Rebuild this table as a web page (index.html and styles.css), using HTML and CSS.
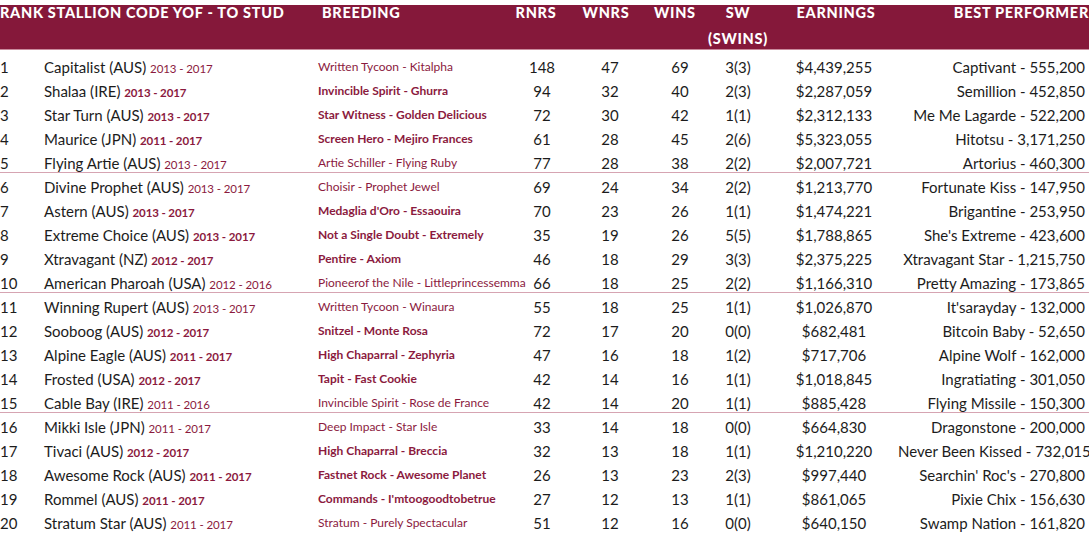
FILE: index.html
```html
<!DOCTYPE html>
<html lang="en">
<head>
<meta charset="utf-8">
<title>Stallion table</title>
<link rel="stylesheet" href="styles.css">
</head>
<body>
<div class="table">
  <div class="thead">
    <div class="h h-stallion">RANK STALLION CODE YOF - TO STUD</div>
    <div class="h h-breeding">BREEDING</div>
    <div class="h h-rnrs">RNRS</div>
    <div class="h h-wnrs">WNRS</div>
    <div class="h h-wins">WINS</div>
    <div class="h h-sw">SW<br>(SWINS)</div>
    <div class="h h-earn">EARNINGS</div>
    <div class="h h-best">BEST PERFORMER</div>
  </div>

  <div class="group">
    <div class="row"><span>1</span><span>Capitalist (AUS) <em>2013 - 2017</em></span><span class="br">Written Tycoon - Kitalpha</span><span class="n">148</span><span class="n">47</span><span class="n">69</span><span class="c">3(3)</span><span class="c">$4,439,255</span><span class="best">Captivant - 555,200</span></div>
    <div class="row bold"><span>2</span><span>Shalaa (IRE) <em>2013 - 2017</em></span><span class="br">Invincible Spirit - Ghurra</span><span class="n">94</span><span class="n">32</span><span class="n">40</span><span class="c">2(3)</span><span class="c">$2,287,059</span><span class="best">Semillion - 452,850</span></div>
    <div class="row bold"><span>3</span><span>Star Turn (AUS) <em>2013 - 2017</em></span><span class="br">Star Witness - Golden Delicious</span><span class="n">72</span><span class="n">30</span><span class="n">42</span><span class="c">1(1)</span><span class="c">$2,312,133</span><span class="best">Me Me Lagarde - 522,200</span></div>
    <div class="row bold"><span>4</span><span>Maurice (JPN) <em>2011 - 2017</em></span><span class="br">Screen Hero - Mejiro Frances</span><span class="n">61</span><span class="n">28</span><span class="n">45</span><span class="c">2(6)</span><span class="c">$5,323,055</span><span class="best">Hitotsu - 3,171,250</span></div>
    <div class="row"><span>5</span><span>Flying Artie (AUS) <em>2013 - 2017</em></span><span class="br">Artie Schiller - Flying Ruby</span><span class="n">77</span><span class="n">28</span><span class="n">38</span><span class="c">2(2)</span><span class="c">$2,007,721</span><span class="best">Artorius - 460,300</span></div>
  </div>

  <div class="group">
    <div class="row"><span>6</span><span>Divine Prophet (AUS) <em>2013 - 2017</em></span><span class="br">Choisir - Prophet Jewel</span><span class="n">69</span><span class="n">24</span><span class="n">34</span><span class="c">2(2)</span><span class="c">$1,213,770</span><span class="best">Fortunate Kiss - 147,950</span></div>
    <div class="row bold"><span>7</span><span>Astern (AUS) <em>2013 - 2017</em></span><span class="br">Medaglia d'Oro - Essaouira</span><span class="n">70</span><span class="n">23</span><span class="n">26</span><span class="c">1(1)</span><span class="c">$1,474,221</span><span class="best">Brigantine - 253,950</span></div>
    <div class="row bold"><span>8</span><span>Extreme Choice (AUS) <em>2013 - 2017</em></span><span class="br">Not a Single Doubt - Extremely</span><span class="n">35</span><span class="n">19</span><span class="n">26</span><span class="c">5(5)</span><span class="c">$1,788,865</span><span class="best">She's Extreme - 423,600</span></div>
    <div class="row bold"><span>9</span><span>Xtravagant (NZ) <em>2012 - 2017</em></span><span class="br">Pentire - Axiom</span><span class="n">46</span><span class="n">18</span><span class="n">29</span><span class="c">3(3)</span><span class="c">$2,375,225</span><span class="best">Xtravagant Star - 1,215,750</span></div>
    <div class="row"><span>10</span><span>American Pharoah (USA) <em>2012 - 2016</em></span><span class="br">Pioneerof the Nile - Littleprincessemma</span><span class="n">66</span><span class="n">18</span><span class="n">25</span><span class="c">2(2)</span><span class="c">$1,166,310</span><span class="best">Pretty Amazing - 173,865</span></div>
  </div>

  <div class="group">
    <div class="row"><span>11</span><span>Winning Rupert (AUS) <em>2013 - 2017</em></span><span class="br">Written Tycoon - Winaura</span><span class="n">55</span><span class="n">18</span><span class="n">25</span><span class="c">1(1)</span><span class="c">$1,026,870</span><span class="best">It'sarayday - 132,000</span></div>
    <div class="row bold"><span>12</span><span>Sooboog (AUS) <em>2012 - 2017</em></span><span class="br">Snitzel - Monte Rosa</span><span class="n">72</span><span class="n">17</span><span class="n">20</span><span class="c">0(0)</span><span class="c">$682,481</span><span class="best">Bitcoin Baby - 52,650</span></div>
    <div class="row bold"><span>13</span><span>Alpine Eagle (AUS) <em>2011 - 2017</em></span><span class="br">High Chaparral - Zephyria</span><span class="n">47</span><span class="n">16</span><span class="n">18</span><span class="c">1(2)</span><span class="c">$717,706</span><span class="best">Alpine Wolf - 162,000</span></div>
    <div class="row bold"><span>14</span><span>Frosted (USA) <em>2012 - 2017</em></span><span class="br">Tapit - Fast Cookie</span><span class="n">42</span><span class="n">14</span><span class="n">16</span><span class="c">1(1)</span><span class="c">$1,018,845</span><span class="best">Ingratiating - 301,050</span></div>
    <div class="row"><span>15</span><span>Cable Bay (IRE) <em>2011 - 2016</em></span><span class="br">Invincible Spirit - Rose de France</span><span class="n">42</span><span class="n">14</span><span class="n">20</span><span class="c">1(1)</span><span class="c">$885,428</span><span class="best">Flying Missile - 150,300</span></div>
  </div>

  <div class="group last">
    <div class="row"><span>16</span><span>Mikki Isle (JPN) <em>2011 - 2017</em></span><span class="br">Deep Impact - Star Isle</span><span class="n">33</span><span class="n">14</span><span class="n">18</span><span class="c">0(0)</span><span class="c">$664,830</span><span class="best">Dragonstone - 200,000</span></div>
    <div class="row bold"><span>17</span><span>Tivaci (AUS) <em>2012 - 2017</em></span><span class="br">High Chaparral - Breccia</span><span class="n">32</span><span class="n">13</span><span class="n">18</span><span class="c">1(1)</span><span class="c">$1,210,220</span><span class="best">Never Been Kissed - 732,015</span></div>
    <div class="row bold"><span>18</span><span>Awesome Rock (AUS) <em>2011 - 2017</em></span><span class="br">Fastnet Rock - Awesome Planet</span><span class="n">26</span><span class="n">13</span><span class="n">23</span><span class="c">2(3)</span><span class="c">$997,440</span><span class="best">Searchin' Roc's - 270,800</span></div>
    <div class="row bold"><span>19</span><span>Rommel (AUS) <em>2011 - 2017</em></span><span class="br">Commands - I'mtoogoodtobetrue</span><span class="n">27</span><span class="n">12</span><span class="n">13</span><span class="c">1(1)</span><span class="c">$861,065</span><span class="best">Pixie Chix - 156,630</span></div>
    <div class="row"><span>20</span><span>Stratum Star (AUS) <em>2011 - 2017</em></span><span class="br">Stratum - Purely Spectacular</span><span class="n">51</span><span class="n">12</span><span class="n">16</span><span class="c">0(0)</span><span class="c">$640,150</span><span class="best">Swamp Nation - 161,820</span></div>
  </div>
</div>
</body>
</html>
```

FILE: styles.css
```css
html, body {
  margin: 0;
  padding: 0;
  background: #ffffff;
}

body {
  font-family: Lato, "Liberation Sans", sans-serif;
  color: #1c1c1c;
  width: 1089px;
}

.table {
  width: 1089px;
  padding-top: 5px;
}

.thead,
.row {
  display: grid;
  grid-template-columns: 44px 274px 200px 48px 88px 52px 64px 128px 1fr;
  padding-right: 4px;
}

.thead {
  height: 44px;
  background: #85183a;
  border-bottom: 1px solid #c98a9c;
  color: #ffffff;
  font-family: Lato, "Liberation Sans", sans-serif;
  font-weight: 900;
  font-size: 14.5px;
  letter-spacing: 0.7px;
  line-height: 26px;
  margin-bottom: 3px;
}

.h {
  margin-top: -5px;
  white-space: nowrap;
}

.h-stallion { grid-column: 1 / 3; }
.h-breeding { padding-left: 4px; }
.h-rnrs { text-align: center; padding-right: 6px; margin-left: -6px; }
.h-wnrs { text-align: center; padding-right: 8px; }
.h-wins { text-align: center; padding-right: 14px; }
.h-sw { text-align: center; }
.h-earn { text-align: center; padding-left: 4px; }
.h-best { display: flex; justify-content: flex-end; margin-right: -4px; }

.group {
  border-bottom: 1px solid #d6a4b2;
  padding-top: 2px;
}

.group:first-of-type { padding-top: 0; }

.group.last { border-bottom: 0; }

.row {
  height: 24px;
  font-size: 15px;
  line-height: 24px;
  align-items: start;
  white-space: nowrap;
}

.group .row:last-child { height: 21px; }

.row em {
  font-style: normal;
  font-size: 11.5px;
  letter-spacing: -0.1px;
  color: #8b1a3e;
  font-weight: 400;
}

.row .br {
  font-size: 12px;
  color: #8b1a3e;
}

.row.bold em,
.row.bold .br {
  font-weight: 700;
}

.n, .c { text-align: center; }

.best {
  display: flex;
  justify-content: flex-end;
}
```
